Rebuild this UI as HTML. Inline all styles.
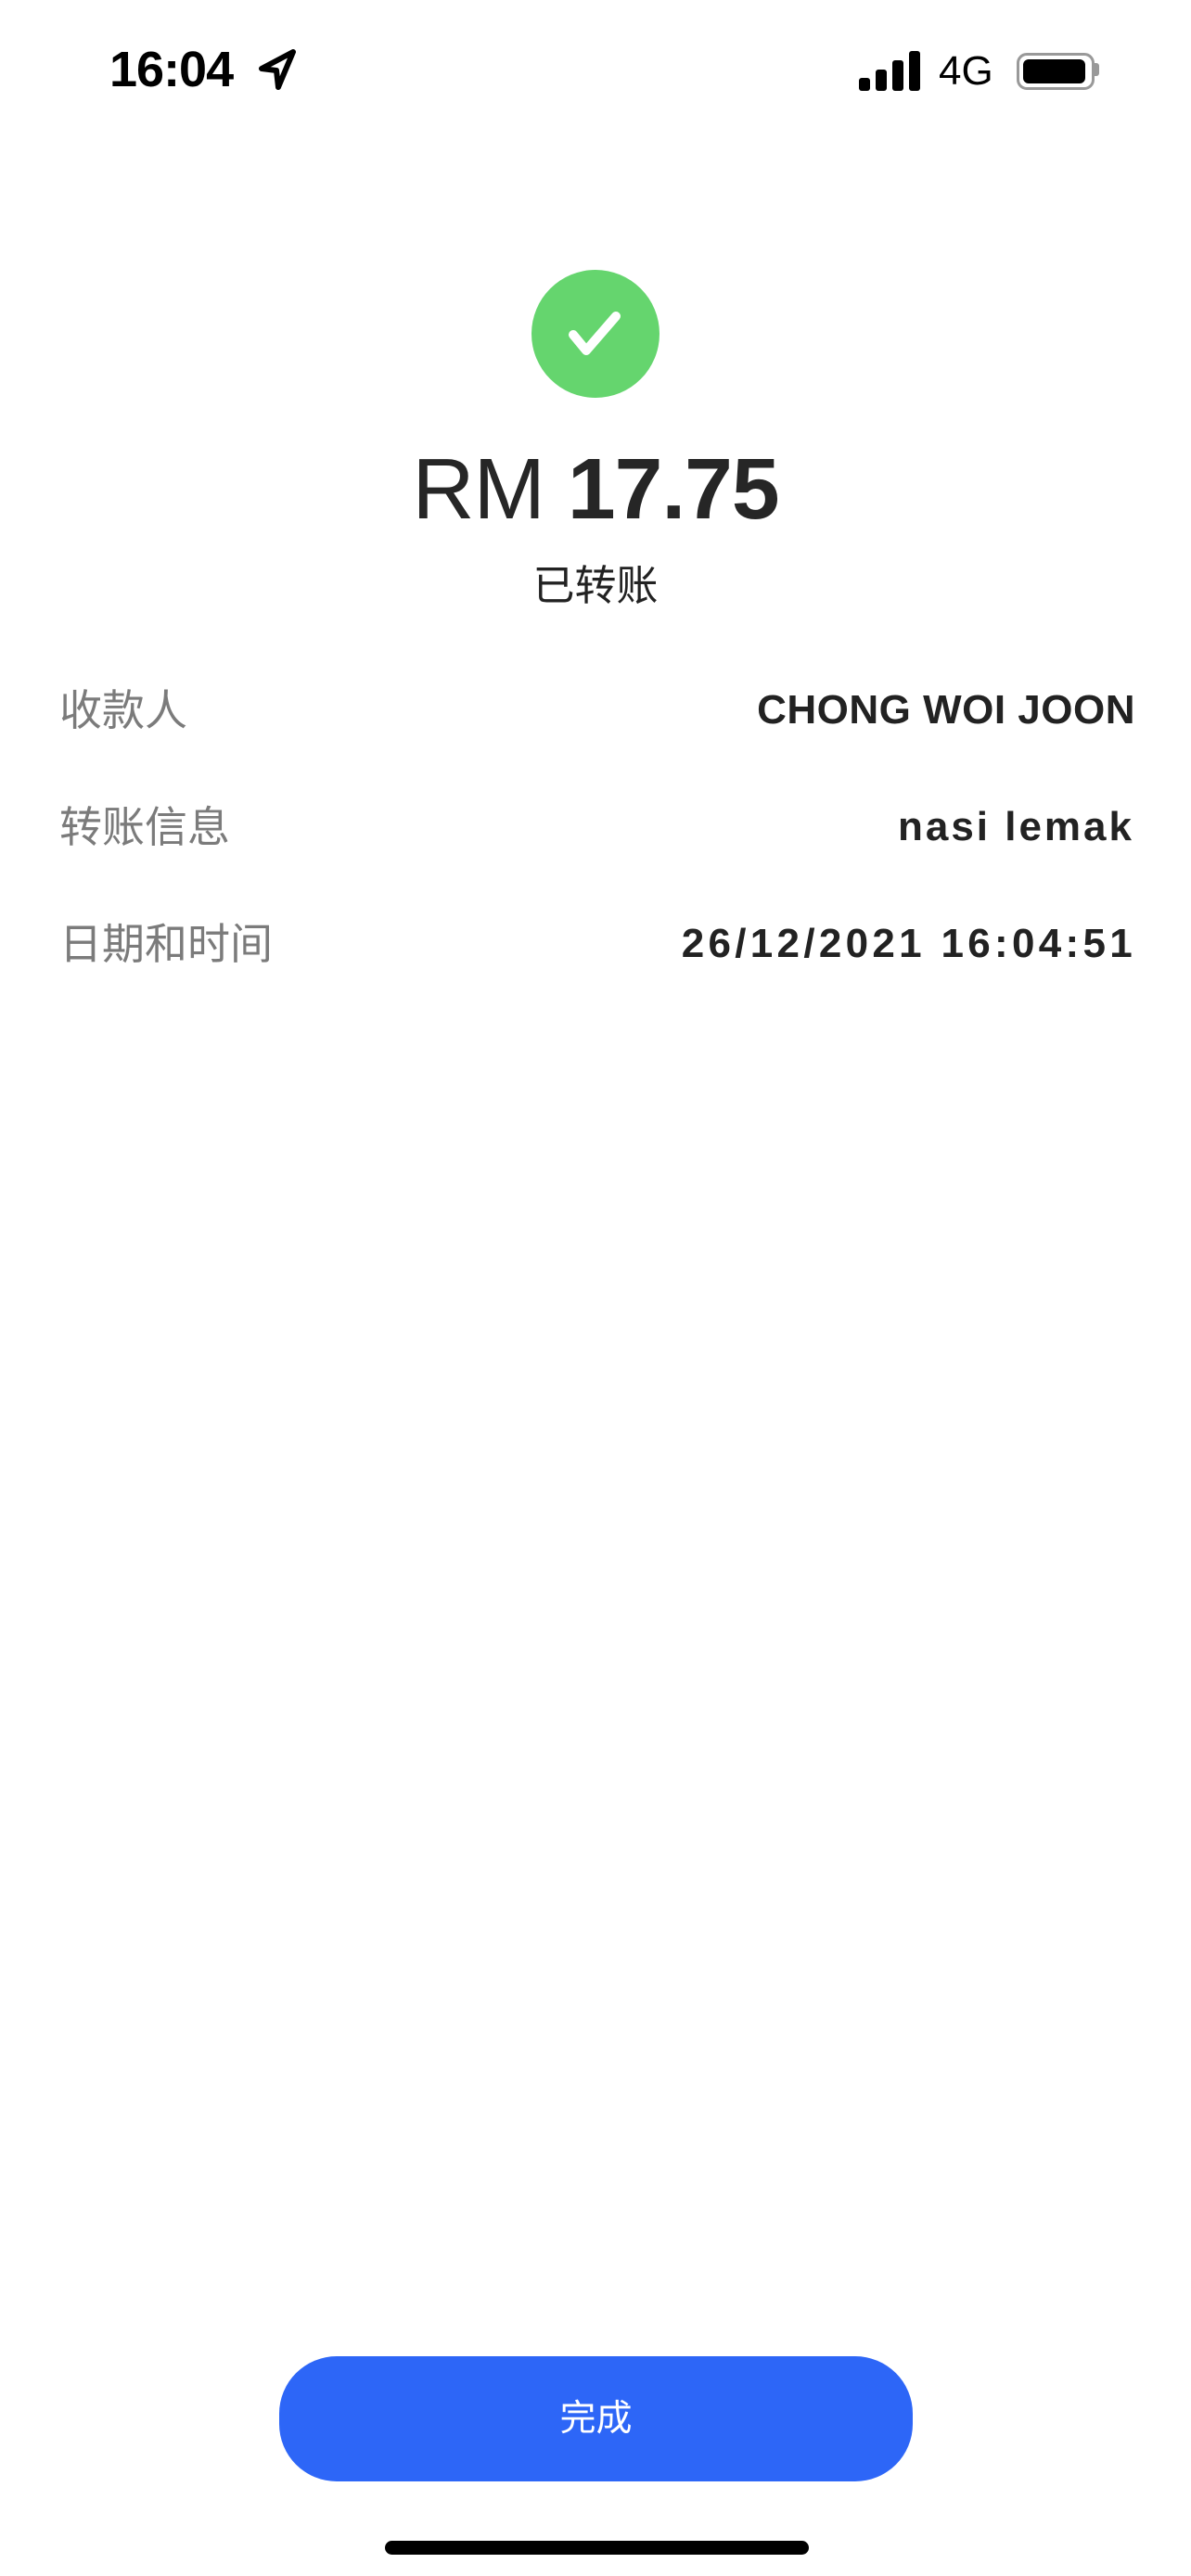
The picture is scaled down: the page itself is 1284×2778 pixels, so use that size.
<!DOCTYPE html>
<html><head><meta charset="utf-8"><style>
html,body{margin:0;padding:0;background:#fff;}
body{width:1284px;height:2778px;position:relative;overflow:hidden;font-family:"Liberation Sans","Noto Sans CJK SC",sans-serif;}
.a{position:absolute;white-space:nowrap;}
.lbl{left:64px;font-size:46px;color:#7b7b7b;line-height:1;}
.val{right:60px;font-size:44px;color:#222;font-weight:bold;line-height:1;}
</style></head><body>
<div class="a" style="left:118px;top:48px;font-size:54px;font-weight:bold;color:#000;letter-spacing:-1px;line-height:1;">16:04</div>
<svg class="a" style="left:278px;top:52px" width="44" height="48" viewBox="0 0 44 48"><path d="M38 4 L4 22 L20 24 L22 42 Z" fill="none" stroke="#000" stroke-width="6" stroke-linejoin="round"/></svg>
<div class="a" style="left:926px;top:84px;width:12px;height:14px;background:#000;border-radius:3px"></div>
<div class="a" style="left:944px;top:75px;width:12px;height:23px;background:#000;border-radius:3px"></div>
<div class="a" style="left:962px;top:65px;width:12px;height:33px;background:#000;border-radius:3px"></div>
<div class="a" style="left:980px;top:55px;width:12px;height:43px;background:#000;border-radius:3px"></div>
<div class="a" style="left:1012px;top:55px;font-size:44px;color:#000;line-height:1;">4G</div>
<div class="a" style="left:1096px;top:57px;width:78px;height:34px;border:3px solid #999;border-radius:11px;"></div>
<div class="a" style="left:1103px;top:64px;width:67px;height:26px;background:#000;border-radius:6px;"></div>
<div class="a" style="left:1180px;top:68px;width:5px;height:14px;background:#999;border-radius:0 3px 3px 0;"></div>

<svg class="a" style="left:573px;top:291px" width="138" height="138" viewBox="0 0 138 138"><circle cx="69" cy="69" r="69" fill="#65d56e"/><path d="M45 70 L59 87 L91 50" fill="none" stroke="#fff" stroke-width="10" stroke-linecap="round" stroke-linejoin="round"/></svg>

<div class="a" style="left:0;width:1284px;text-align:center;top:481px;font-size:93px;color:#262626;line-height:1;letter-spacing:-1px;">RM <b>17.75</b></div>
<div class="a" style="left:0;width:1284px;text-align:center;top:609px;font-size:45px;color:#222;line-height:1;">已转账</div>

<div class="a lbl" style="top:743px">收款人</div>
<div class="a val" style="top:744px;letter-spacing:0.5px">CHONG WOI JOON</div>
<div class="a lbl" style="top:869px">转账信息</div>
<div class="a val" style="top:870px;letter-spacing:3px;right:61px">nasi lemak</div>
<div class="a lbl" style="top:995px">日期和时间</div>
<div class="a val" style="top:996px;letter-spacing:4.3px;right:59px">26/12/2021 16:04:51</div>

<div class="a" style="left:301px;top:2541px;width:683px;height:135px;background:#2d66f7;border-radius:62px;color:#fff;font-size:39px;text-align:center;line-height:135px;">完成</div>
<div class="a" style="left:415px;top:2740px;width:457px;height:15px;background:#000;border-radius:8px;"></div>
</body></html>
